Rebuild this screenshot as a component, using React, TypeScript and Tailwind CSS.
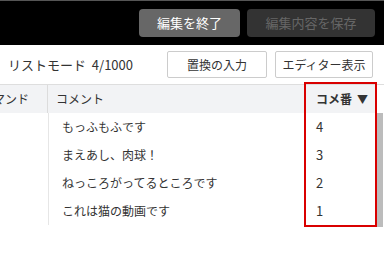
import React from "react";

const comments = [
  { text: "もっふもふです", no: 4 },
  { text: "まえあし、肉球！", no: 3 },
  { text: "ねっころがってるところです", no: 2 },
  { text: "これは猫の動画です", no: 1 },
];

export default function App() {
  return (
    <div className="w-[384px] h-[260px] overflow-hidden bg-white text-[#333] font-['Noto_Sans_CJK_JP','Liberation_Sans',sans-serif]">
      {/* 上部バー */}
      <div className="h-[45px] bg-black border-t border-[#555] flex items-center justify-end gap-[7px] pr-[9px]">
        <button className="w-[101px] h-[28px] rounded-[4px] bg-[#676767] text-white text-[13px]">
          編集を終了
        </button>
        <button className="w-[128px] h-[28px] rounded-[4px] bg-[#333] text-[#666] text-[13px]">
          編集内容を保存
        </button>
      </div>

      {/* ツールバー */}
      <div className="h-[40px] flex items-center pl-[8px] pr-[11px] border-b border-[#dedede]">
        <span className="text-[13px]">リストモード&nbsp;&nbsp;4/1000</span>
        <div className="ml-auto flex gap-[8px]">
          <button className="w-[100px] h-[27px] border border-[#ccc] rounded-[2px] bg-white text-[12px]">
            置換の入力
          </button>
          <button className="w-[98px] h-[27px] border border-[#ccc] rounded-[2px] bg-white text-[12px]">
            エディター表示
          </button>
        </div>
      </div>

      {/* テーブル */}
      <div className="flex text-[12px]">
        <div className="w-[304px]">
          <div className="h-[28px] bg-[#f2f3f5] flex items-center">
            <div className="w-[48px] h-full overflow-hidden flex items-center justify-end pr-[18px] border-r border-[#dcdcdc] whitespace-nowrap">
              コマンド
            </div>
            <div className="pl-[8px]">コメント</div>
          </div>
          {comments.map((c) => (
            <div key={c.no} className="h-[28px] flex">
              <div className="w-[48px]" />
              <div className="flex-1 border-l border-[#e6e6e6] flex items-center pl-[13px]">{c.text}</div>
            </div>
          ))}
        </div>

        <div className="w-[73px] h-[145px] -mt-[3px] border-2 border-[#d90000] pt-[1px] relative">
          <div className="h-[28px] bg-[#f2f3f5] flex items-center pl-[10px] font-bold gap-[5px]">
            <span>コメ番</span>
            <span className="text-[11px]">▼</span>
          </div>
          {comments.map((c) => (
            <div key={c.no} className="h-[28px] flex items-center pl-[10px] text-[13px]">
              {c.no}
            </div>
          ))}
        </div>

        <div className="w-[6px] flex flex-col">
          <div className="h-[28px]" />
          <div className="flex-1 h-[160px] bg-[#bcbcbc]" />
        </div>
      </div>
    </div>
  );
}
